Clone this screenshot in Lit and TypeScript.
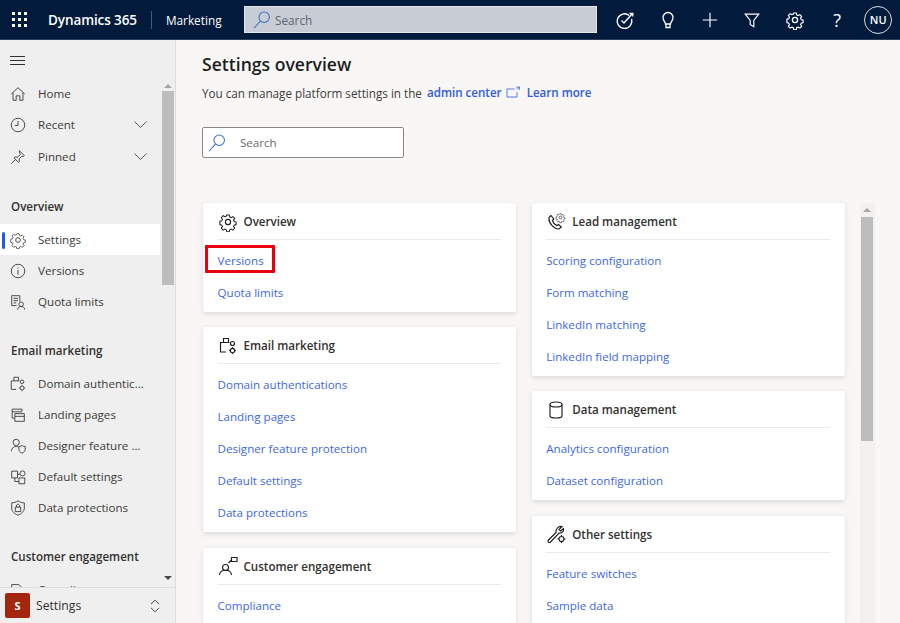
import { LitElement, html, css, svg } from 'lit';
import { customElement } from 'lit/decorators.js';

const gear = svg`<circle cx="10" cy="10" r="2.6"/><path d="M8.6 2.2h2.8l.5 2.2 1.5.7 2-1.1 2 2-1.2 1.9.7 1.6 2.1.6v2.8l-2.1.6-.7 1.6 1.2 1.9-2 2-2-1.1-1.5.7-.5 2.2H8.6l-.5-2.2-1.5-.7-2 1.1-2-2 1.2-1.9-.7-1.6-2.1-.6V9.1l2.1-.6.7-1.6-1.2-1.9 2-2 2 1.1 1.5-.7z" transform="translate(1 1) scale(.9)"/>`;

const icons: Record<string, unknown> = {
  search: svg`<circle cx="12" cy="7.500" r="4.800"/><path d="M8.500 11 2.700 17.500"/>`,
  home: svg`<path d="M2.500 10 10 3l7.500 7M4.500 8.500V17H8v-5h4v5h3.500V8.500"/>`,
  clock: svg`<circle cx="10" cy="10" r="7.500"/><path d="M10 5.500V10.500H6.500"/>`,
  pin: svg`<path d="m11.500 3 5.500 5.500-1.200 1-1.500-.5-3 3 .2 3-1 1-5-5 1-1 3 .2 3-3-.5-1.500zM7 13l-4.500 4.500"/>`,
  gear,
  info: svg`<circle cx="10" cy="10" r="7.500"/><path d="M10 9v5M10 6v1.200"/>`,
  quota: svg`<path d="M8.500 14H3V3h9v6.500M5 6h5M5 8.500h5M5 11h3"/><circle cx="13.500" cy="12.500" r="2.500"/><path d="M9.500 18.500c.3-2.500 2-3.500 4-3.500s3.700 1 4 3.500"/>`,
  domain: svg`<path d="M8 16H2.500V6.500h3V2.500h5v4M5.500 6.500h6"/><circle cx="14.500" cy="7.500" r="2"/><circle cx="14.500" cy="14.500" r="2.200"/><path d="M14.500 11v1M14.500 17v1M11 14.500h1M17 14.500h1"/>`,
  pages: svg`<path d="M6 13.500H3.500V3.500h11V6M3.500 6.500h11"/><path d="M6.500 8.500H17V17H6.500zM6.500 11.500H17"/>`,
  shieldUser: svg`<circle cx="8" cy="6" r="3.500"/><path d="M2.500 16c.2-3.500 2.500-5.500 5.500-5.500 1 0 1.700.2 2.500.6"/><path d="M14.500 9.500c1 .8 2 1 3.500 1v3c0 2.200-1.500 3.700-3.500 4.500-2-.8-3.500-2.300-3.500-4.500v-3c1.500 0 2.500-.2 3.500-1z"/>`,
  boxes: svg`<path d="M3 3.500h6.500V11H3zM6.500 11v4H11M9.500 7H12M11 11h6.500v6.500H11z"/><circle cx="15" cy="6" r="2.800"/>`,
  lock: svg`<path d="M10 2c2.200 1.500 4.500 2.200 7 2.300V10c0 3.800-3 6.500-7 8-4-1.500-7-4.200-7-8V4.300C5.500 4.200 7.800 3.500 10 2z"/><path d="M7 9h6v5H7zM8.300 9V7.500c0-2.300 3.400-2.300 3.400 0V9"/>`,
  doc: svg`<path d="M3 17V4h8l4 4v2M3 8h12"/>`,
  phone: svg`<path d="M5 3.500 3 5.500c-.8 5 4.500 11.500 10 11.500l2.300-2-2.800-2.500-1.800 1C8.500 12.500 7 10.500 6.500 8.500l1.300-1.500z"/><g transform="translate(9 0) scale(.55)">${gear}</g>`,
  person: svg`<circle cx="7.500" cy="11.500" r="3"/><path d="M1.500 19c.3-3 2.800-4.700 6-4.700s5.700 1.700 6 4.700M10.500 7l3-3"/><path d="M13.500 1.500H19v4h-5.500z"/>`,
  cylinder: svg`<ellipse cx="10" cy="4.500" rx="6" ry="2.500"/><path d="M4 4.500v11.500c0 1.200 2.700 2 6 2s6-.8 6-2V4.500"/>`,
  wrench: svg`<path d="M16 2.500 13 5.500l1.500 1.500 3-2.500c.5 2.700-1.500 5-4.500 4.500L4.500 18c-1.500 1.500-3.500-.5-2-2L10 8.500C9.500 5 12.500 1.500 16 2.500z"/><circle cx="15.500" cy="15" r="2.500"/><path d="M15.500 11v1.500M15.500 17.500V19M11.500 15H13M18 15h1.500"/>`,
  target: svg`<path d="M14.200 5.500A7.300 7.300 0 1 0 16.500 9"/><path d="m6.500 10.500 2.500 2.500 8.500-9.500M14.500 3.500h3.300v3"/>`,
  bulb: svg`<path d="M7.500 14c0-2-2.500-3.200-2.500-6.500a5 5 0 0 1 10 0c0 3.300-2.500 4.500-2.500 6.500zM8 14v3.500h4V14"/>`,
  plus: svg`<path d="M10 2v16M2 10h16"/>`,
  filter: svg`<path d="M2.500 3.500h15L12 10.500v7l-4-2.500v-4.500z"/>`,
  chevron: svg`<path d="M3 6.500 10 13.500l7-7"/>`,
  updown: svg`<path d="M5.500 8 10 3.500 14.500 8M5.500 12 10 16.500 14.500 12"/>`,
  external: svg`<path d="M12 5H2.500v10H15V9M14 2.500h4V6M18 2.500l-3 3"/>`,
};

function icon(name: string, size = 20) {
  return html`<svg class="ico" width=${size} height=${size} viewBox="0 0 20 20" aria-hidden="true">${icons[name]}</svg>`;
}

const navGroups = [
  {
    items: [
      { label: 'Home', icon: 'home' },
      { label: 'Recent', icon: 'clock', more: true },
      { label: 'Pinned', icon: 'pin', more: true },
    ],
  },
  {
    title: 'Overview',
    items: [
      { label: 'Settings', icon: 'gear', active: true },
      { label: 'Versions', icon: 'info' },
      { label: 'Quota limits', icon: 'quota' },
    ],
  },
  {
    title: 'Email marketing',
    items: [
      { label: 'Domain authentications', icon: 'domain' },
      { label: 'Landing pages', icon: 'pages' },
      { label: 'Designer feature protection', icon: 'shieldUser' },
      { label: 'Default settings', icon: 'boxes' },
      { label: 'Data protections', icon: 'lock' },
    ],
  },
  {
    title: 'Customer engagement',
    items: [{ label: 'Compliance', icon: 'doc' }],
  },
];

const leftCards = [
  { title: 'Overview', icon: 'gear', links: ['Versions', 'Quota limits'] },
  {
    title: 'Email marketing',
    icon: 'domain',
    links: ['Domain authentications', 'Landing pages', 'Designer feature protection', 'Default settings', 'Data protections'],
  },
  { title: 'Customer engagement', icon: 'person', links: ['Compliance'] },
];

const rightCards = [
  {
    title: 'Lead management',
    icon: 'phone',
    links: ['Scoring configuration', 'Form matching', 'LinkedIn matching', 'LinkedIn field mapping'],
  },
  { title: 'Data management', icon: 'cylinder', links: ['Analytics configuration', 'Dataset configuration'] },
  { title: 'Other settings', icon: 'wrench', links: ['Feature switches', 'Sample data'] },
];

@customElement('app-root')
export class AppRoot extends LitElement {
  static styles = css`
    :host {
      display: block;
      width: 900px;
      height: 623px;
      overflow: hidden;
      font-family: 'Open Sans', 'Noto Sans', sans-serif;
      font-size: 11.6px;
      color: #323130;
      background: #f8f7f6;
    }

    .ico {
      flex: none;
      fill: none;
      stroke: currentColor;
      stroke-width: 1;
    }

    .topbar {
      height: 40px;
      background: #021a3c;
      color: #fff;
      display: flex;
      align-items: center;
      box-sizing: border-box;
      border-bottom: 1px solid #2c3e5a;
    }

    .waffle {
      display: grid;
      grid-template-columns: repeat(3, 3px);
      gap: 3px;
      margin-left: 12px;
      margin-right: 21px;
    }

    .waffle i {
      width: 3px;
      height: 3px;
      background: #fff;
    }

    .brand {
      font-size: 13.5px;
      font-weight: 600;
      letter-spacing: -0.1px;
      padding-right: 14px;
      border-right: 1px solid #4b5b73;
      line-height: 18px;
    }

    .app {
      font-size: 11.8px;
      font-weight: 500;
      margin-left: 14px;
      width: 78px;
    }

    .topsearch {
      width: 353px;
      height: 27px;
      box-sizing: border-box;
      background: #c8ccd4;
      border: 1px solid #e3e5e9;
      display: flex;
      align-items: center;
      gap: 2px;
      padding-left: 6px;
      color: #5f6670;
      font-size: 11.8px;
    }

    .topsearch .ico,
    .boxsearch .ico {
      color: #3f74c9;
    }

    .actions {
      display: flex;
      align-items: center;
      margin-left: 7px;
    }

    .action {
      width: 42.4px;
      display: flex;
      justify-content: center;
      align-items: center;
      font-size: 18px;
    }

    .action .ico {
      stroke-width: 1.3;
    }

    .avatar {
      width: 26px;
      height: 26px;
      border: 1px solid #d9dde3;
      border-radius: 50%;
      display: flex;
      align-items: center;
      justify-content: center;
      font-size: 11px;
      font-weight: 600;
      margin-left: 6px;
    }

    .body {
      display: flex;
      height: 583px;
    }

    .sidebar {
      width: 176px;
      flex: none;
      box-sizing: border-box;
      background: #efefef;
      border-right: 1px solid #dedddc;
      display: flex;
      flex-direction: column;
    }

    .burger {
      height: 38px;
      flex: none;
      box-sizing: border-box;
      padding: 2px 0 0 10px;
      display: flex;
      align-items: center;
    }

    .burger span {
      display: grid;
      gap: 3px;
      width: 15px;
    }

    .burger i {
      height: 1px;
      background: #323130;
    }

    .navwrap {
      flex: 1;
      min-height: 0;
      display: flex;
    }

    .nav {
      width: 160px;
      flex: none;
      overflow: hidden;
    }

    .group {
      margin-bottom: 16px;
    }

    .group:first-child {
      margin-bottom: 17px;
    }

    .group:first-child .row:last-child {
      margin-top: 1px;
    }

    .group h3 {
      margin: 0;
      height: 35px;
      line-height: 35px;
      padding-left: 11px;
      font-size: 11.6px;
      font-weight: 600;
    }

    .row {
      height: 31px;
      display: flex;
      align-items: center;
      padding-left: 9px;
      position: relative;
      color: #3c3b39;
    }

    .row > .ico:first-child {
      margin-right: 11px;
    }

    .row .label {
      flex: 1;
      min-width: 0;
      white-space: nowrap;
      overflow: hidden;
      text-overflow: ellipsis;
      padding-right: 14px;
    }

    .row .more {
      width: 17px;
      height: 17px;
      margin-right: 11px;
    }

    .row.active {
      background: #fff;
    }

    .row.active::before {
      content: '';
      position: absolute;
      left: 2px;
      top: 8px;
      bottom: 6px;
      width: 3px;
      border-radius: 2px;
      background: #1d5cf0;
    }

    .bar {
      width: 15px;
      flex: none;
      display: flex;
      flex-direction: column;
      align-items: center;
    }

    .up,
    .down {
      flex: none;
      width: 0;
      height: 0;
      border-left: 4px solid transparent;
      border-right: 4px solid transparent;
    }

    .up {
      border-bottom: 4px solid #a6a6a6;
    }

    .down {
      border-top: 4px solid #4a4a4a;
    }

    .thumb {
      width: 12px;
      background: #bdbdbd;
    }

    .sidebar .bar {
      padding-top: 6px;
      box-sizing: border-box;
    }

    .sidebar .thumb {
      height: 194px;
      margin-top: 3px;
      margin-bottom: auto;
    }

    .sidebar .down {
      margin-bottom: 7px;
    }

    .switcher {
      height: 36px;
      flex: none;
      box-sizing: border-box;
      border-top: 1px solid #dedddc;
      display: flex;
      align-items: center;
      padding-left: 5px;
      font-weight: 500;
      font-size: 12.2px;
    }

    .tile {
      width: 25px;
      height: 25px;
      border-radius: 2px;
      background: #a5260f;
      color: #fff;
      font-size: 11px;
      font-weight: 700;
      display: flex;
      align-items: center;
      justify-content: center;
      margin-right: 6px;
    }

    .switcher .name {
      flex: 1;
    }

    .switcher .ico {
      margin-right: 11px;
    }

    .main {
      flex: 1;
      min-width: 0;
      overflow: hidden;
      padding: 12px 0 0 26px;
    }

    h1 {
      margin: 0;
      font-size: 17.6px;
      line-height: 24px;
      font-weight: 600;
      color: #201f1e;
    }

    .sub {
      margin-top: 6.5px;
      line-height: 20px;
      display: flex;
      align-items: center;
      font-size: 11.7px;
      color: #3c3b39;
    }

    .sub a {
      color: #2f5bd8;
      font-weight: 600;
      font-size: 11.6px;
      margin-left: 5px;
    }

    .sub .ico {
      margin: 0 6px 0 3px;
      color: #2f5bd8;
    }

    .sub a + .ico + a {
      margin-left: 0;
    }

    .boxsearch {
      margin-top: 24.5px;
      width: 202px;
      height: 31px;
      box-sizing: border-box;
      background: #fff;
      border: 1px solid #8a8886;
      border-radius: 2px;
      display: flex;
      align-items: center;
      padding-left: 3px;
      gap: 12px;
      color: #6d6c6a;
    }

    .content {
      display: flex;
      margin-top: 45px;
      margin-left: 1px;
    }

    .col {
      width: 313px;
      flex: none;
      display: flex;
      flex-direction: column;
      gap: 15.7px;
    }

    .col + .col {
      margin-left: 15.7px;
    }

    .card {
      background: #fff;
      border-radius: 2px;
      box-shadow: 0 1.6px 5px rgba(0, 0, 0, 0.12);
      padding: 0 15px 3.1px 14.5px;
    }

    .cardhead {
      height: 37px;
      box-sizing: border-box;
      padding-top: 1px;
      border-bottom: 1px solid #edebe9;
      display: flex;
      align-items: center;
      gap: 6px;
      font-weight: 600;
      color: #323130;
      margin-bottom: 4.6px;
    }

    .cardhead .ico {
      stroke-width: 1.15;
      color: #201f1e;
    }

    .link {
      height: 32px;
      display: flex;
      align-items: center;
      color: #3d68e0;
    }

    .link span {
      position: relative;
    }

    .link .marked::after {
      content: '';
      position: absolute;
      left: -13px;
      right: -11px;
      top: -8px;
      bottom: -5px;
      border: 3px solid #e8000f;
      border-radius: 1px;
    }

    .content .bar {
      margin-left: 15.3px;
      height: 420px;
      background: #f2f1f0;
      padding-top: 5px;
      box-sizing: border-box;
    }

    .content .thumb {
      height: 224px;
      margin-top: 5px;
    }
  `;

  private renderCard(card: { title: string; icon: string; links: string[] }) {
    return html`
      <section class="card">
        <div class="cardhead">${icon(card.icon, 20)}<span>${card.title}</span></div>
        ${card.links.map(
          (link) => html`
            <div class="link">
              <span class=${card.title === 'Overview' && link === 'Versions' ? 'marked' : ''}>${link}</span>
            </div>
          `
        )}
      </section>
    `;
  }

  render() {
    return html`
      <header class="topbar">
        <div class="waffle">${Array.from({ length: 9 }, () => html`<i></i>`)}</div>
        <div class="brand">Dynamics 365</div>
        <div class="app">Marketing</div>
        <div class="topsearch">${icon('search', 22)}<span>Search</span></div>
        <div class="actions">
          <div class="action">${icon('target', 20)}</div>
          <div class="action">${icon('bulb', 20)}</div>
          <div class="action">${icon('plus', 18)}</div>
          <div class="action">${icon('filter', 18)}</div>
          <div class="action">${icon('gear', 20)}</div>
          <div class="action">?</div>
          <div class="avatar">NU</div>
        </div>
      </header>
      <div class="body">
        <aside class="sidebar">
          <div class="burger"><span><i></i><i></i><i></i></span></div>
          <div class="navwrap">
            <nav class="nav">
              ${navGroups.map(
                (group) => html`
                  <div class="group">
                    ${group.title ? html`<h3>${group.title}</h3>` : ''}
                    ${group.items.map(
                      (item: any) => html`
                        <div class="row ${item.active ? 'active' : ''}">
                          ${icon(item.icon, 18)}
                          <span class="label">${item.label}</span>
                          ${item.more ? html`<svg class="ico more" viewBox="0 0 20 20">${icons.chevron}</svg>` : ''}
                        </div>
                      `
                    )}
                  </div>
                `
              )}
            </nav>
            <div class="bar"><div class="up"></div><div class="thumb"></div><div class="down"></div></div>
          </div>
          <div class="switcher">
            <div class="tile">S</div>
            <span class="name">Settings</span>
            ${icon('updown', 18)}
          </div>
        </aside>
        <main class="main">
          <h1>Settings overview</h1>
          <div class="sub">
            You can manage platform settings in the
            <a>admin center</a>${icon('external', 16)}<a>Learn more</a>
          </div>
          <div class="boxsearch">${icon('search', 22)}<span>Search</span></div>
          <div class="content">
            <div class="col">${leftCards.map((c) => this.renderCard(c))}</div>
            <div class="col">${rightCards.map((c) => this.renderCard(c))}</div>
            <div class="bar"><div class="up"></div><div class="thumb"></div></div>
          </div>
        </main>
      </div>
    `;
  }
}
